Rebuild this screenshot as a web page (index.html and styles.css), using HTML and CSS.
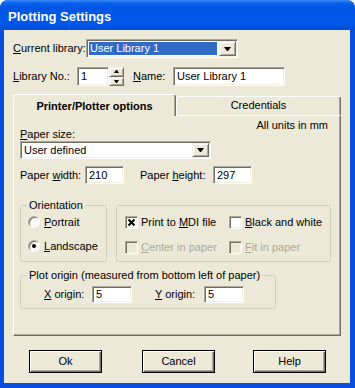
FILE: index.html
```html
<!DOCTYPE html>
<html lang="en">
  <head>
    <meta charset="UTF-8" />
    <title>Plotting Settings</title>
    <link rel="stylesheet" href="styles.css">
  </head>
  <body>
    <div class="window">
      <div class="titlebar">Plotting Settings</div>
      <div class="client">
        <div class="row row-lib">
          <span class="lbl lbl-lib"><u>C</u>urrent library:</span>
          <div class="combo combo-lib">
            <span class="combo-text selected">User Library 1</span>
            <span class="drop"><i class="arrow"></i></span>
          </div>
        </div>
        <div class="row row-no">
          <span class="lbl lbl-no"><u>L</u>ibrary No.:</span>
          <div class="edit edit-no">1</div>
          <div class="spin">
            <span class="spin-btn"><i class="arrow arrow-sm up"></i></span>
            <span class="spin-btn"><i class="arrow arrow-sm"></i></span>
          </div>
          <span class="lbl lbl-name"><u>N</u>ame:</span>
          <div class="edit edit-name">User Library 1</div>
        </div>

        <div class="tabs">
          <div class="tabstrip">
            <div class="tab tab-active">Printer/Plotter options</div>
            <div class="tab">Credentials</div>
          </div>
          <div class="panel">
            <div class="units">All units in mm</div>
            <div class="lbl"><u>P</u>aper size:</div>
            <div class="combo combo-paper">
              <span class="combo-text">User defined</span>
              <span class="drop"><i class="arrow"></i></span>
            </div>
            <div class="row row-size">
              <span class="lbl lbl-width">Paper <u>w</u>idth:</span>
              <div class="edit edit-size">210</div>
              <span class="lbl lbl-height">Paper <u>h</u>eight:</span>
              <div class="edit edit-size">297</div>
            </div>

            <div class="groups">
              <fieldset class="group group-orient">
                <legend>Orientation</legend>
                <div class="group-body">
                  <div class="opt"><span class="radio"></span><span><u>P</u>ortrait</span></div>
                  <div class="opt"><span class="radio checked"></span><span><u>L</u>andscape</span></div>
                </div>
              </fieldset>
              <div class="group group-print">
                <div class="opt">
                  <span class="check">
                    <svg width="9" height="9" viewBox="0 0 9 9"><path d="M1.5 1.5L7.5 7.5M7.5 1.5L1.5 7.5" stroke="#000" stroke-width="2" fill="none"/></svg>
                  </span>
                  <span>Print to <u>M</u>DI file</span>
                </div>
                <div class="opt"><span class="check"></span><span><u>B</u>lack and white</span></div>
                <div class="opt disabled"><span class="check"></span><span><u>C</u>enter in paper</span></div>
                <div class="opt disabled"><span class="check"></span><span><u>F</u>it in paper</span></div>
              </div>
            </div>

            <fieldset class="group group-origin">
              <legend>Plot origin (measured from bottom left of paper)</legend>
              <div class="row row-origin">
                <span class="lbl lbl-x"><u>X</u> origin:</span>
                <div class="edit edit-origin">5</div>
                <span class="lbl lbl-y"><u>Y</u> origin:</span>
                <div class="edit edit-origin">5</div>
              </div>
            </fieldset>
          </div>
        </div>

        <div class="buttons">
          <div class="btn btn-ok">Ok</div>
          <div class="btn btn-cancel">Cancel</div>
          <div class="btn btn-help">Help</div>
        </div>
      </div>
    </div>
  </body>
</html>
```

FILE: styles.css
```css
body {
  margin: 0;
  background-color: #fff;
  font-family: "Liberation Sans", Arial, sans-serif;
  font-size: 11px;
  color: #000;
}
u {
  text-decoration: underline;
  text-underline-offset: 1px;
}
.window {
  width: 355px;
  height: 388px;
  box-sizing: border-box;
  display: flex;
  flex-direction: column;
  padding: 0 5px 5px 4px;
  background-color: #0a4ede;
  border-radius: 8px 8px 0 0;
  overflow: hidden;
}
.titlebar {
  flex: none;
  height: 30px;
  box-sizing: border-box;
  margin: 0 -5px 0 -4px;
  padding: 5px 0 0 8px;
  line-height: 24px;
  font-size: 13px;
  font-weight: bold;
  color: #fff;
  background: linear-gradient(#3d8cf6 0, #0b62ec 3px, #0055e5 8px, #0058e9 24px, #004cd6 30px);
}
.client {
  flex: 1;
  padding: 9px 0 0 9px;
  background-color: #ece9d8;
}
.row {
  display: flex;
  align-items: center;
  height: 19px;
}
.lbl {
  line-height: 13px;
  white-space: nowrap;
}

/* sunken fields */
.combo,
.edit {
  box-sizing: border-box;
  background-color: #fff;
  border: 1px solid;
  border-color: #aca899 #fff #fff #aca899;
  box-shadow: inset 1px 1px 0 #716f64, inset -1px -1px 0 #f1efe2;
}
.combo {
  display: flex;
  height: 19px;
  padding: 1px;
}
.combo-text {
  flex: 1;
  padding-left: 2px;
  line-height: 15px;
}
.selected {
  margin: 1px 2px 1px 1px;
  padding-left: 1px;
  line-height: 13px;
  background-color: #316ac5;
  color: #fff;
}
.drop,
.spin-btn {
  display: flex;
  align-items: center;
  justify-content: center;
  box-sizing: border-box;
  background-color: #ece9d8;
  border: 1px solid;
  border-color: #f1efe2 #716f64 #716f64 #f1efe2;
  box-shadow: inset 1px 1px 0 #fff, inset -1px -1px 0 #aca899;
}
.drop {
  width: 17px;
}
.arrow {
  width: 1px;
  height: 0;
  border-left: 3px solid transparent;
  border-right: 3px solid transparent;
  border-top: 4px solid #000;
}
.arrow-sm {
  border-left-width: 2px;
  border-right-width: 2px;
  border-top-width: 3px;
}
.arrow.up {
  border-top: 0;
  border-bottom: 3px solid #000;
}
.edit {
  height: 19px;
  padding-left: 3px;
  line-height: 16px;
}

.lbl-lib {
  width: 73px;
}
.combo-lib {
  width: 152px;
}
.row-no {
  margin-top: 9px;
}
.lbl-no {
  width: 64px;
}
.edit-no {
  width: 32px;
}
.spin {
  display: flex;
  flex-direction: column;
  width: 15px;
  height: 19px;
}
.spin-btn {
  flex: 1;
}
.lbl-name {
  width: 40px;
  margin-left: 9px;
}
.edit-name {
  width: 112px;
}

/* tab control */
.tabs {
  width: 328px;
  margin-top: 8px;
}
.tabstrip {
  position: relative;
  z-index: 1;
  display: flex;
  align-items: flex-end;
  height: 21px;
}
.tab {
  box-sizing: border-box;
  width: 165px;
  height: 19px;
  padding-top: 2px;
  text-align: center;
  line-height: 13px;
  background-color: #ece9d8;
  border: 1px solid;
  border-bottom: 0;
  border-color: #fff #716f64 #716f64 #fff;
  border-radius: 3px 3px 0 0;
  box-shadow: inset -1px 0 0 #aca899;
}
.tab-active {
  width: 163px;
  height: 22px;
  margin-bottom: -1px;
  padding-top: 5px;
  font-weight: bold;
}
.panel {
  box-sizing: border-box;
  height: 221px;
  padding: 3px 0 0 6px;
  background-color: #ece9d8;
  border: 1px solid;
  border-color: #fff #716f64 #716f64 #fff;
  box-shadow: inset -1px -1px 0 #aca899;
}
.units {
  height: 9px;
  padding-right: 12px;
  line-height: 13px;
  text-align: right;
}
.combo-paper {
  width: 191px;
  height: 18px;
}
.combo-paper .combo-text {
  line-height: 14px;
}
.row-size {
  height: 18px;
  margin-top: 7px;
}
.row-size .edit {
  height: 18px;
}
.lbl-width {
  width: 65px;
}
.edit-size {
  width: 39px;
}
.lbl-height {
  width: 73px;
  margin-left: 16px;
}

/* group boxes */
.groups {
  display: flex;
  align-items: flex-start;
  margin-top: 15px;
}
.group {
  box-sizing: border-box;
  margin: 0;
  padding: 0;
  border: 1px solid #d0d0bf;
  border-radius: 3px;
}
legend {
  margin-left: 6px;
  padding: 0 2px;
  line-height: 13px;
  white-space: nowrap;
}
.opt {
  display: flex;
  align-items: center;
  height: 16px;
  white-space: nowrap;
}
.group-orient {
  width: 87px;
  height: 63px;
}
.group-orient .group-body {
  padding: 2px 0 0 7px;
}
.group-orient .opt {
  margin-bottom: 8px;
}
.radio {
  position: relative;
  flex: none;
  width: 12px;
  height: 12px;
  margin-right: 4px;
  box-sizing: border-box;
  background-color: #fff;
  border: 1px solid;
  border-color: #aca899 #fff #fff #aca899;
  border-radius: 50%;
  box-shadow: inset 1px 1px 0 #716f64, inset -1px -1px 0 #f1efe2;
}
.radio.checked::after {
  content: "";
  position: absolute;
  left: 3px;
  top: 3px;
  width: 4px;
  height: 4px;
  border-radius: 50%;
  background-color: #000;
}
.group-print {
  display: grid;
  grid-template-columns: 104px 1fr;
  row-gap: 9px;
  align-content: start;
  width: 215px;
  height: 57px;
  margin: 6px 0 0 9px;
  padding: 8px 0 0 8px;
}
.check {
  display: flex;
  align-items: center;
  justify-content: center;
  flex: none;
  width: 13px;
  height: 13px;
  margin-right: 3px;
  box-sizing: border-box;
  background-color: #fff;
  border: 1px solid;
  border-color: #aca899 #fff #fff #aca899;
  box-shadow: inset 1px 1px 0 #716f64, inset -1px -1px 0 #f1efe2;
}
.disabled {
  color: #aca899;
}
.disabled .check {
  background-color: #ece9d8;
}
.group-origin {
  width: 256px;
  height: 40px;
  margin-top: 7px;
}
.row-origin {
  height: 17px;
  margin-top: 4px;
  padding-left: 23px;
}
.row-origin .edit {
  height: 17px;
  line-height: 14px;
}
.lbl-x {
  width: 48px;
}
.edit-origin {
  width: 40px;
}
.lbl-y {
  width: 49px;
  margin-left: 23px;
}

/* buttons */
.buttons {
  display: flex;
  margin-top: 14px;
  padding-left: 16px;
}
.btn {
  box-sizing: border-box;
  width: 73px;
  height: 23px;
  line-height: 21px;
  text-align: center;
  background-color: #ece9d8;
  border: 1px solid #000;
  box-shadow: inset 1px 1px 0 #fff, inset -1px -1px 0 #716f64, inset -2px -2px 0 #aca899;
}
.btn-cancel {
  margin-left: 40px;
}
.btn-help {
  margin-left: 38px;
}
```
